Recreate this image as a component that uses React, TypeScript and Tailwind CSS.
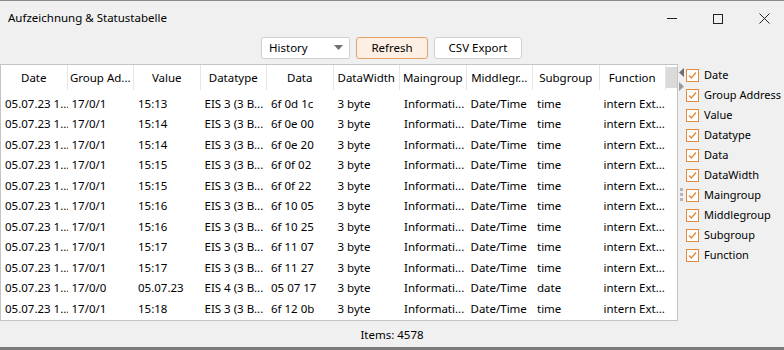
import React from "react";

const cols = ["Date", "Group Ad...", "Value", "Datatype", "Data", "DataWidth", "Maingroup", "Middlegr...", "Subgroup", "Function"];

const partial = ["05.07.23 1...", "17/0/1", "15:13", "EIS 3 (3 B...", "6f 0d 1b", "3 byte", "Informati...", "Date/Time", "time", "intern Ext..."];

const rows: string[][] = [
  ["05.07.23 1...", "17/0/1", "15:13", "EIS 3 (3 B...", "6f 0d 1c", "3 byte", "Informati...", "Date/Time", "time", "intern Ext..."],
  ["05.07.23 1...", "17/0/1", "15:14", "EIS 3 (3 B...", "6f 0e 00", "3 byte", "Informati...", "Date/Time", "time", "intern Ext..."],
  ["05.07.23 1...", "17/0/1", "15:14", "EIS 3 (3 B...", "6f 0e 20", "3 byte", "Informati...", "Date/Time", "time", "intern Ext..."],
  ["05.07.23 1...", "17/0/1", "15:15", "EIS 3 (3 B...", "6f 0f 02", "3 byte", "Informati...", "Date/Time", "time", "intern Ext..."],
  ["05.07.23 1...", "17/0/1", "15:15", "EIS 3 (3 B...", "6f 0f 22", "3 byte", "Informati...", "Date/Time", "time", "intern Ext..."],
  ["05.07.23 1...", "17/0/1", "15:16", "EIS 3 (3 B...", "6f 10 05", "3 byte", "Informati...", "Date/Time", "time", "intern Ext..."],
  ["05.07.23 1...", "17/0/1", "15:16", "EIS 3 (3 B...", "6f 10 25", "3 byte", "Informati...", "Date/Time", "time", "intern Ext..."],
  ["05.07.23 1...", "17/0/1", "15:17", "EIS 3 (3 B...", "6f 11 07", "3 byte", "Informati...", "Date/Time", "time", "intern Ext..."],
  ["05.07.23 1...", "17/0/1", "15:17", "EIS 3 (3 B...", "6f 11 27", "3 byte", "Informati...", "Date/Time", "time", "intern Ext..."],
  ["05.07.23 1...", "17/0/0", "05.07.23", "EIS 4 (3 B...", "05 07 17", "3 byte", "Informati...", "Date/Time", "date", "intern Ext..."],
  ["05.07.23 1...", "17/0/1", "15:18", "EIS 3 (3 B...", "6f 12 0b", "3 byte", "Informati...", "Date/Time", "time", "intern Ext..."],
];

const checks = ["Date", "Group Address", "Value", "Datatype", "Data", "DataWidth", "Maingroup", "Middlegroup", "Subgroup", "Function"];

function Check() {
  return (
    <div className="w-[13px] h-[13px] border border-[#e08a3c] bg-white flex items-center justify-center shrink-0">
      <svg width="11" height="11" viewBox="0 0 11 11">
        <path d="M2 5.5 L4.3 8 L9 2.5" fill="none" stroke="#e08a3c" strokeWidth="1.4" />
      </svg>
    </div>
  );
}

function Row({ r }: { r: string[] }) {
  return (
    <div className="h-[20.5px] flex items-center shrink-0">
      {r.map((v, j) => (
        <div key={j} className="w-[66.5px] shrink-0 pl-[4px] whitespace-nowrap overflow-hidden">
          {v}
        </div>
      ))}
    </div>
  );
}

export default function App() {
  return (
    <div
      className="w-[784px] h-[350px] bg-[#f0f0f0] border-t border-[#8a8a8a] flex flex-col text-black overflow-hidden"
      style={{ fontFamily: '"Noto Sans", "Open Sans", sans-serif' }}
    >
      {/* Title bar */}
      <div className="h-[35px] flex items-center shrink-0">
        <div className="pl-[8px] text-[11.5px] text-black flex-1 pb-[1px]">Aufzeichnung &amp; Statustabelle</div>
        <div className="flex items-center h-full mr-[-3px]">
          <div className="w-[46px] h-full flex items-center justify-center">
            <div className="w-[10px] h-px bg-[#222]" />
          </div>
          <div className="w-[46px] h-full flex items-center justify-center">
            <div className="w-[10px] h-[10px] border border-[#222]" />
          </div>
          <div className="w-[46px] h-full flex items-center justify-center">
            <svg width="11" height="11" viewBox="0 0 11 11">
              <path d="M0.5 0.5 L10.5 10.5 M10.5 0.5 L0.5 10.5" stroke="#222" strokeWidth="1" />
            </svg>
          </div>
        </div>
      </div>

      {/* Toolbar */}
      <div className="h-[28px] flex items-start justify-center pt-[1px] shrink-0 text-[11.5px]">
        <div className="flex gap-[6px] ml-[-1px]">
          <div className="w-[89px] h-[22px] bg-white border border-[#d0d0d0] rounded-[2px] flex items-center justify-between pl-[7px] pr-[6px]">
            <span>History</span>
            <svg width="9" height="6" viewBox="0 0 9 6"><path d="M0 0 L9 0 L4.5 5 Z" fill="#707070" /></svg>
          </div>
          <div className="w-[72px] h-[22px] bg-[#fdefe3] border border-[#e4a26a] rounded-[3px] flex items-center justify-center">Refresh</div>
          <div className="w-[88px] h-[22px] bg-white border border-[#d0d0d0] rounded-[3px] flex items-center justify-center">CSV Export</div>
        </div>
      </div>

      {/* Main */}
      <div className="flex flex-1 min-h-0">
        <div className="w-[678px] h-[257px] bg-white border border-[#c4c4c4] flex flex-col overflow-hidden shrink-0">
          <div className="h-[25px] flex shrink-0 text-[11.5px]">
            {cols.map((c) => (
              <div key={c} className="w-[66.5px] shrink-0 border-r border-[#e6e6e6] flex items-center justify-center whitespace-nowrap">
                {c}
              </div>
            ))}
            <div className="flex-1 bg-[#dadada] border-t-[2px] border-b-[2px] border-white" />
          </div>
          <div className="flex-1 overflow-hidden text-[11.5px] flex flex-col">
            <div className="h-[3px] overflow-hidden shrink-0 flex flex-col justify-end">
              <Row r={partial} />
            </div>
            {rows.map((r, i) => (
              <Row key={i} r={r} />
            ))}
          </div>
        </div>

        {/* Right panel */}
        <div className="flex-1 flex">
          <div className="w-[7px] flex flex-col items-center">
            <svg className="mt-[4px]" width="5" height="9" viewBox="0 0 5 9"><path d="M5 0 L0 4.5 L5 9 Z" fill="#6e6e6e" /></svg>
            <svg className="mt-[5px]" width="5" height="9" viewBox="0 0 5 9"><path d="M0 0 L5 4.5 L0 9 Z" fill="#9a9a9a" /></svg>
            <div className="mt-[97px] flex flex-col gap-[2px]">
              <div className="w-[3px] h-[3px] bg-[#b5b5b5]" />
              <div className="w-[3px] h-[3px] bg-[#b5b5b5]" />
              <div className="w-[3px] h-[3px] bg-[#b5b5b5]" />
            </div>
          </div>
          <div className="flex flex-col pt-px pl-[1px] text-[11px]">
            {checks.map((c) => (
              <div key={c} className="h-[20px] flex items-center gap-[5px] whitespace-nowrap">
                <Check />
                <span>{c}</span>
              </div>
            ))}
          </div>
        </div>
      </div>

      {/* Status bar */}
      <div className="h-[27px] shrink-0 flex items-center justify-center text-[11.5px] border-b-[3px] border-[#7a7a7a]">
        Items: 4578
      </div>
    </div>
  );
}
